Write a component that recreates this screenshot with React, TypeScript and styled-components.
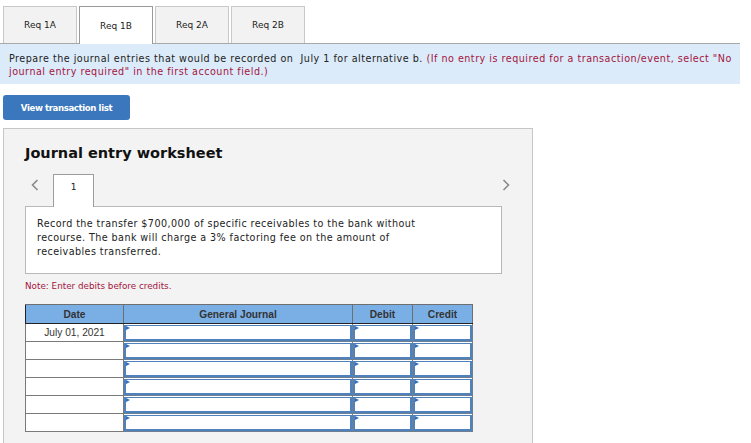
import React from "react";
import styled, { createGlobalStyle } from "styled-components";

const GlobalStyle = createGlobalStyle`
  html, body {
    margin: 0;
    padding: 0;
    background: #ffffff;
    font-family: "DejaVu Sans", Verdana, sans-serif;
    color: #222;
  }
  * { box-sizing: border-box; }
`;

const Page = styled.div`
  width: 751px;
  height: 443px;
  overflow: hidden;
`;

const TabBar = styled.div`
  display: flex;
  gap: 2px;
  padding: 6px 0 0 3px;
  width: 740px;
  border-bottom: 1px solid #a8a8a8;
`;

const Tab = styled.div<{ active?: boolean }>`
  width: 74px;
  display: flex;
  align-items: center;
  justify-content: center;
  font-size: 9px;
  color: #222;
  background: ${({ active }) => (active ? "#ffffff" : "#f2f2f2")};
  border: 1px solid ${({ active }) => (active ? "#9a9a9a" : "#c8c8c8")};
  border-bottom: none;
  margin-bottom: ${({ active }) => (active ? "-1px" : "0")};
  height: ${({ active }) => (active ? "38px" : "37px")};
`;

const Instruction = styled.div`
  width: 740px;
  height: 40px;
  background: #dcebf9;
  padding: 8px 6px 0 9px;
  font-size: 9.6px;
  letter-spacing: 0.5px;
  line-height: 13px;
  color: #222;
`;

const Red = styled.span`
  color: #a3153e;
`;

const ViewButton = styled.button`
  display: block;
  margin: 11px 0 0 3px;
  width: 127px;
  height: 25px;
  border: none;
  border-radius: 3px;
  background: #3b77bc;
  color: #ffffff;
  font-family: "DejaVu Sans", Verdana, sans-serif;
  font-weight: bold;
  font-size: 8.6px;
  letter-spacing: -0.4px;
  padding: 0;
`;

const Worksheet = styled.div`
  margin: 8px 0 0 3px;
  width: 530px;
  height: 320px;
  background: #f3f3f3;
  border: 1px solid #c6c6c6;
  padding: 12px 0 0 21px;
`;

const Title = styled.h2`
  margin: 0;
  font-size: 14.5px;
  font-weight: bold;
  color: #111;
  height: 33px;
  line-height: 24px;
`;

const EntryNav = styled.div`
  display: flex;
  align-items: flex-end;
  width: 477px;
  height: 32px;
`;

const Chevron = styled.div<{ right?: boolean }>`
  width: 28px;
  height: 32px;
  display: flex;
  align-items: center;
  justify-content: ${({ right }) => (right ? "flex-end" : "flex-start")};
  padding: ${({ right }) => (right ? "0 0 10px 0" : "0 0 10px 6px")};
  margin-left: ${({ right }) => (right ? "auto" : "0")};
  margin-right: ${({ right }) => (right ? "-8px" : "0")};
`;

const EntryTab = styled.div`
  width: 41px;
  height: 33px;
  margin-bottom: -1px;
  background: #ffffff;
  border: 1px solid #9c9c9c;
  border-bottom: none;
  display: flex;
  justify-content: center;
  padding-top: 7px;
  font-size: 9px;
  color: #222;
  position: relative;
  z-index: 1;
`;

const Description = styled.div`
  width: 477px;
  height: 68px;
  background: #ffffff;
  border: 1px solid #b8b8b8;
  padding: 10px 60px 0 11px;
  font-size: 9.6px;
  letter-spacing: 0.42px;
  line-height: 14px;
  color: #222;
`;

const Note = styled.div`
  margin-top: 6px;
  font-size: 8.8px;
  color: #a3153e;
  height: 24px;
  line-height: 12px;
`;

const Table = styled.table`
  border-collapse: collapse;
  width: 447px;
  font-family: "Liberation Sans", Arial, sans-serif;
  table-layout: fixed;
`;

const HeadCell = styled.th<{ w: number }>`
  width: ${({ w }) => w}px;
  height: 19px;
  background: #7aafe6;
  border: 1px solid #6f6f6f;
  border-bottom: 1px solid #222;
  border-left-color: #222;
  font-size: 10.2px;
  font-weight: bold;
  color: #333;
  padding: 0;
`;

const DateCell = styled.td`
  height: 18px;
  background: #ffffff;
  border: 1px solid #7a7a7a;
  font-size: 10.2px;
  color: #333;
  text-align: center;
  padding: 0;
`;

const InputCell = styled.td`
  height: 18px;
  padding: 0;
  border: 1px solid #6f7f92;
  background: #ffffff;
`;

const InputBox = styled.div`
  position: relative;
  height: 16px;
  margin: 0;
  border: 2px solid #4f81bd;
  border-top-width: 1px;
  background: #ffffff;
  &::before {
    content: "";
    position: absolute;
    left: 0;
    top: 0;
    border-left: 4px solid #2f6fc4;
    border-top: 2px solid transparent;
    border-bottom: 2px solid transparent;
  }
`;

const ChevronIcon = ({ dir }: { dir: "left" | "right" }) => (
  <svg width="8" height="12" viewBox="0 0 8 12">
    <path
      d={dir === "left" ? "M6.5 1 L1.5 6 L6.5 11" : "M1.5 1 L6.5 6 L1.5 11"}
      fill="none"
      stroke="#8a8a8a"
      strokeWidth="1.6"
    />
  </svg>
);

const tabs = ["Req 1A", "Req 1B", "Req 2A", "Req 2B"];
const rows = ["July 01, 2021", "", "", "", "", ""];

export default function App() {
  return (
    <Page>
      <GlobalStyle />
      <TabBar>
        {tabs.map((t) => (
          <Tab key={t} active={t === "Req 1B"}>
            {t}
          </Tab>
        ))}
      </TabBar>
      <Instruction>
        Prepare the journal entries that would be recorded on&nbsp; July 1 for alternative b.{" "}
        <Red>
          (If no entry is required for a transaction/event, select "No journal entry required" in the first
          account field.)
        </Red>
      </Instruction>
      <ViewButton>View transaction list</ViewButton>
      <Worksheet>
        <Title>Journal entry worksheet</Title>
        <EntryNav>
          <Chevron>
            <ChevronIcon dir="left" />
          </Chevron>
          <EntryTab>1</EntryTab>
          <Chevron right>
            <ChevronIcon dir="right" />
          </Chevron>
        </EntryNav>
        <Description>
          Record the transfer $700,000 of specific receivables to the bank without recourse. The bank will
          charge a 3% factoring fee on the amount of receivables transferred.
        </Description>
        <Note>Note: Enter debits before credits.</Note>
        <Table>
          <thead>
            <tr>
              <HeadCell w={98}>Date</HeadCell>
              <HeadCell w={229}>General Journal</HeadCell>
              <HeadCell w={60}>Debit</HeadCell>
              <HeadCell w={60}>Credit</HeadCell>
            </tr>
          </thead>
          <tbody>
            {rows.map((d, i) => (
              <tr key={i}>
                <DateCell>{d}</DateCell>
                <InputCell>
                  <InputBox />
                </InputCell>
                <InputCell>
                  <InputBox />
                </InputCell>
                <InputCell>
                  <InputBox />
                </InputCell>
              </tr>
            ))}
          </tbody>
        </Table>
      </Worksheet>
    </Page>
  );
}
